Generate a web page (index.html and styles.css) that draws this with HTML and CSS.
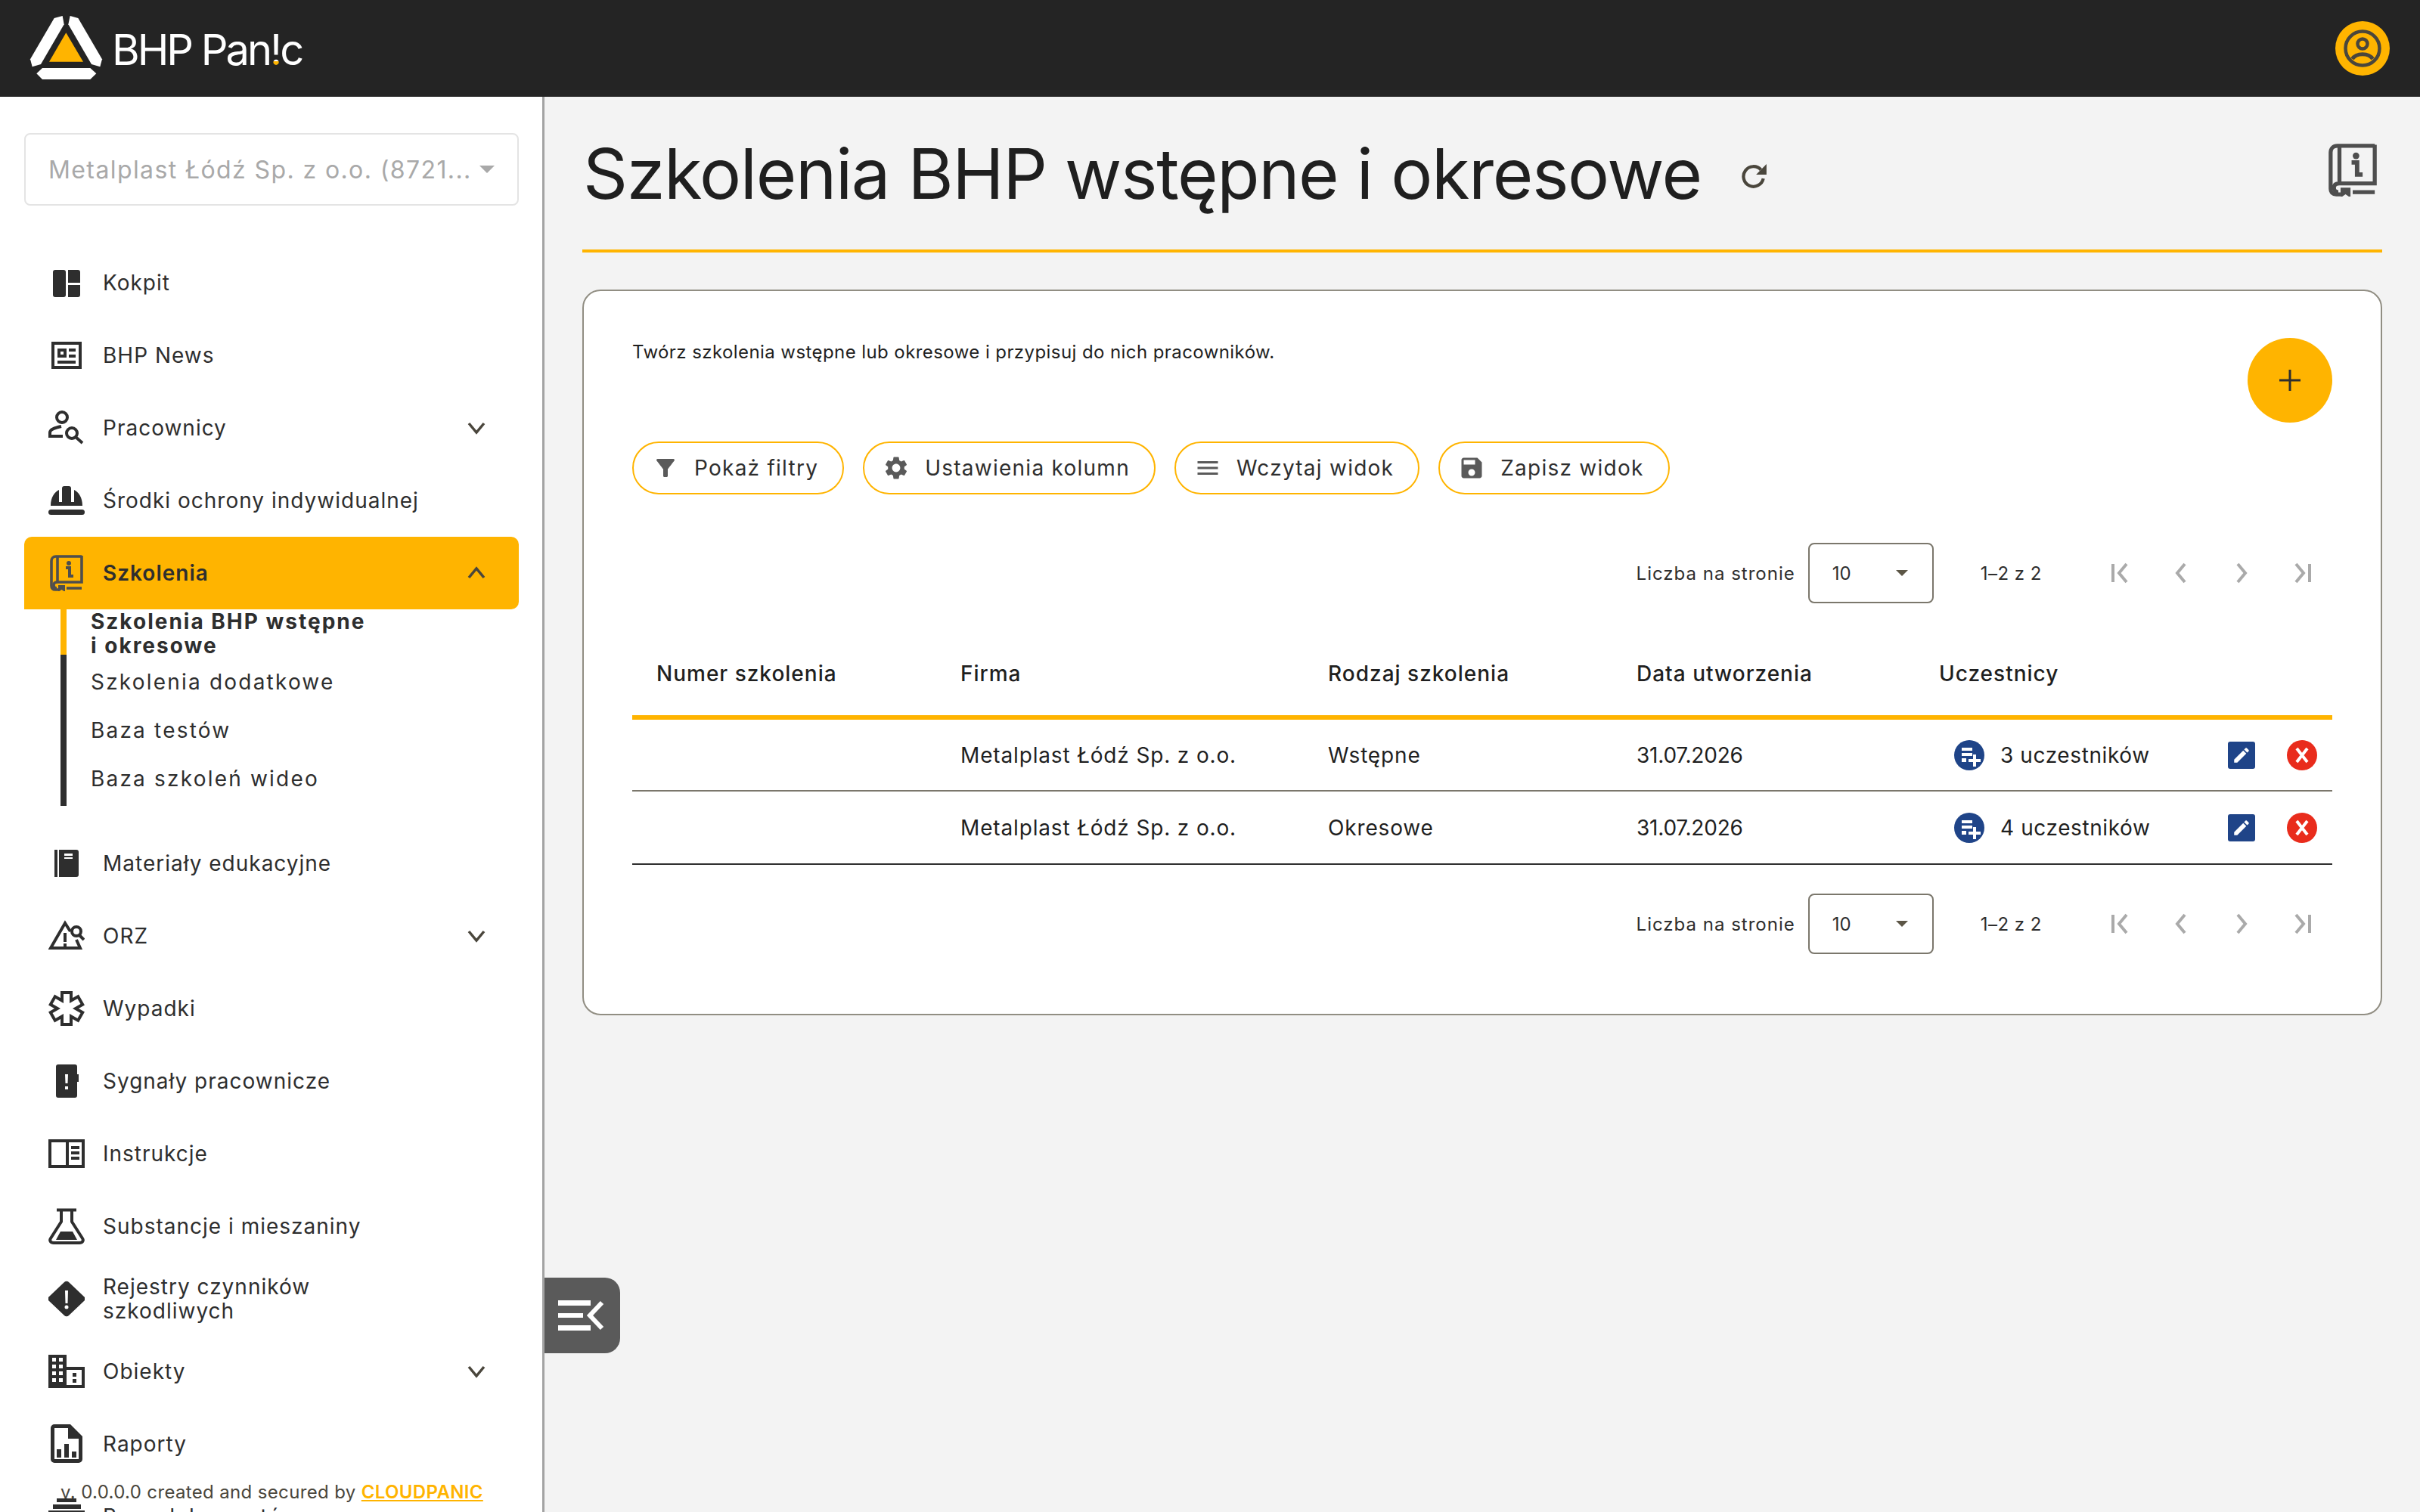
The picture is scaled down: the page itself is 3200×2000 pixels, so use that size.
FILE: index.html
```html
<!DOCTYPE html>
<html lang="pl">
<head>
    <meta charset="UTF-8">
    <title>BHP Panic - Szkolenia</title>
    <link rel="stylesheet" href="styles.css">
</head>
<body>
    <header class="topbar">
        <div class="logo">
            <svg class="logo-mark" viewBox="0 0 345 330">
                <polygon fill="#fff" points="125,45 158,36 164,70 72,228 38,238 30,208"/>
                <polygon fill="#fff" points="220,45 188,36 181,70 273,228 307,238 315,208"/>
                <polygon fill="#ffb400" points="172,103 240,218 105,218"/>
                <polygon fill="#fff" points="55,265 78,243 268,243 292,265 268,288 78,288"/>
            </svg>
            <span class="logo-text">BHP Pan<span class="logo-bang">!</span>c</span>
        </div>
        <div class="avatar">
            <svg viewBox="0 0 24 24" width="60" height="60" fill="none" stroke="#4a463c" stroke-width="1.8">
                <circle cx="12" cy="12" r="9"/>
                <circle cx="12" cy="9.6" r="2.6"/>
                <path d="M6.6 17.6c2-3.4 8.8-3.4 10.8 0" stroke-width="2"/>
            </svg>
        </div>
    </header>

    <div class="layout">
        <aside class="sidebar">
            <div class="company-select">
                <span>Metalplast Łódź Sp. z o.o. (8721...</span>
                <i class="company-arrow"></i>
            </div>

            <nav class="nav">
                <a class="nav-item">
                    <svg class="nav-icon" viewBox="0 0 48 48"><rect x="6" y="7" width="17" height="36" rx="3"/><path d="M26 7h13a3 3 0 0 1 3 3v14H26zM26 27h16v13a3 3 0 0 1-3 3H26z"/></svg>
                    <span>Kokpit</span>
                </a>
                <a class="nav-item">
                    <svg class="nav-icon" viewBox="0 0 48 48"><path fill-rule="evenodd" d="M4 6h40v36H4zM8 10v28h32V10z"/><path fill-rule="evenodd" d="M12 15h12v12H12zM16 19v4h4v-4z"/><path d="M27 15h9v4h-9zM27 23h9v4h-9zM12 31h24v4H12z"/></svg>
                    <span>BHP News</span>
                </a>
                <a class="nav-item">
                    <svg class="nav-icon" viewBox="0 0 48 48"><g fill="none" stroke="#2e2e2e" stroke-width="4"><circle cx="18" cy="10" r="7"/><path d="M17 22C8 24 2 26 2 30v5h17"/><circle cx="31" cy="31" r="7"/><path d="M36 36l9 8"/></g></svg>
                    <span>Pracownicy</span>
                    <svg class="nav-chevron" viewBox="0 0 24 24"><path d="M2 6l10 12L22 6"/></svg>
                </a>
                <a class="nav-item">
                    <svg class="nav-icon" viewBox="0 0 48 48"><path d="M3 31C3 20 8 13 14 10V26h4V8c0-2 1-3 3-3h6c2 0 3 1 3 3V26h4V10c6 3 11 10 11 21z"/><rect y="36" width="48" height="7" rx="3.5"/></svg>
                    <span>Środki ochrony indywidualnej</span>
                </a>
                <a class="nav-item nav-item-active">
                    <svg class="nav-icon" viewBox="0 0 48 48"><use href="#book-info"/></svg>
                    <span>Szkolenia</span>
                    <svg class="nav-chevron" viewBox="0 0 24 24"><path d="M2 18L12 6l10 12"/></svg>
                </a>
                <ul class="subnav">
                    <li class="subnav-item subnav-item-active"><span>Szkolenia BHP wstępne<br>i okresowe</span></li>
                    <li class="subnav-item"><span>Szkolenia dodatkowe</span></li>
                    <li class="subnav-item"><span>Baza testów</span></li>
                    <li class="subnav-item"><span>Baza szkoleń wideo</span></li>
                </ul>
                <a class="nav-item">
                    <svg class="nav-icon" viewBox="0 0 48 48"><rect x="8" y="6" width="4" height="36"/><path fill-rule="evenodd" d="M14 6h23a3 3 0 0 1 3 3v30a3 3 0 0 1-3 3H14zM21 11v3h11v-3zM21 16v2h11v-2z"/></svg>
                    <span>Materiały edukacyjne</span>
                </a>
                <a class="nav-item">
                    <svg class="nav-icon" viewBox="0 0 48 48"><g fill="none" stroke="#2e2e2e" stroke-width="4"><path d="M29 18L22 7 3 40h39l-5-11"/><circle cx="37" cy="18" r="6"/><path d="M41 23l6 6"/></g><rect x="20" y="20" width="4" height="12"/><rect x="20" y="34" width="4" height="4"/></svg>
                    <span>ORZ</span>
                    <svg class="nav-chevron" viewBox="0 0 24 24"><path d="M2 6l10 12L22 6"/></svg>
                </a>
                <a class="nav-item">
                    <svg class="nav-icon" viewBox="0 0 48 48"><polygon fill="none" stroke="#2e2e2e" stroke-width="4" points="18,3 30,3 30,13.6 39.2,8.3 45.2,18.7 36,24 45.2,29.3 39.2,39.7 30,34.4 30,45 18,45 18,34.4 8.8,39.7 2.8,29.3 12,24 2.8,18.7 8.8,8.3 18,13.6"/></svg>
                    <span>Wypadki</span>
                </a>
                <a class="nav-item">
                    <svg class="nav-icon" viewBox="0 0 48 48"><path fill-rule="evenodd" d="M13 2h22a3 3 0 0 1 3 3v10h2v10h-2v18a3 3 0 0 1-3 3H13a3 3 0 0 1-3-3V5a3 3 0 0 1 3-3zM22 15l.5 12h3l.5-12zM22 31v4h4v-4z"/></svg>
                    <span>Sygnały pracownicze</span>
                </a>
                <a class="nav-item">
                    <svg class="nav-icon" viewBox="0 0 48 48"><path fill-rule="evenodd" d="M0 5h48v38H0zM4 9v30h19V9zM27 9v30h17V9z"/><path d="M30 14h11v4H30zM30 21h11v4H30zM30 28h11v4H30z"/></svg>
                    <span>Instrukcje</span>
                </a>
                <a class="nav-item">
                    <svg class="nav-icon" viewBox="0 0 48 48"><g fill="none" stroke="#2e2e2e" stroke-width="4"><path d="M11 2.500h26"/><path d="M17 4v14L3 40c-2 3 0 6 4 6h34c4 0 6-3 4-6L31 18V4"/></g><polygon points="16,31 32,31 38,42 10,42"/></svg>
                    <span>Substancje i mieszaniny</span>
                </a>
                <a class="nav-item nav-item-wrap">
                    <svg class="nav-icon" viewBox="0 0 48 48"><path fill-rule="evenodd" d="M21 2a4 4 0 0 1 6 0l20 19a4 4 0 0 1 0 6L27 46a4 4 0 0 1-6 0L1 27a4 4 0 0 1 0-6zM22 13l.5 17h3l.5-17zM24 32.500a2.500 2.500 0 1 0 0 5 2.500 2.500 0 0 0 0-5z"/></svg>
                    <span>Rejestry czynników<br>szkodliwych</span>
                </a>
                <a class="nav-item">
                    <svg class="nav-icon" viewBox="0 0 48 48"><path fill-rule="evenodd" d="M0 2h24v16h24v28H0zM5 6v5h5V6zM14 6v5h5V6zM5 15v5h5v-5zM14 15v5h5v-5zM5 24v5h5v-5zM14 24v5h5v-5zM5 33v5h5v-5zM14 33v5h5v-5zM24 22v20h20V22zM32 26h5v5h-5zM32 34h5v5h-5z"/></svg>
                    <span>Obiekty</span>
                    <svg class="nav-chevron" viewBox="0 0 24 24"><path d="M2 6l10 12L22 6"/></svg>
                </a>
                <a class="nav-item">
                    <svg class="nav-icon nav-icon-tall" viewBox="0 0 48 54"><path fill-rule="evenodd" d="M8 1h21l16 16v30a5 5 0 0 1-5 5H8a5 5 0 0 1-5-5V6a5 5 0 0 1 5-5zM8 6v41h32V20H26V6z"/><path d="M11 34h6v11h-6zM21 27h6v18h-6zM31 37h6v8h-6z"/></svg>
                    <span>Raporty</span>
                </a>
                <a class="nav-item">
                    <svg class="nav-icon" viewBox="0 0 48 48"><path d="M11 0h26v5H11zM6 8h37v6H6zM0 16h48v6H0z"/></svg>
                    <span>Baza dokumentów</span>
                </a>
            </nav>

            <div class="version">v. 0.0.0.0 created and secured by <a class="version-link">CLOUDPANIC</a></div>
        </aside>

        <button class="sidebar-toggle">
            <svg viewBox="0 0 100 100" width="100" height="100"><path fill="#fff" d="M18 30h43v7H18zM18 47h33v6H18zM18 63h43v7H18z"/><path d="M76 33L60 50l16 17" fill="none" stroke="#fff" stroke-width="6"/></svg>
        </button>

        <main class="content">
            <div class="page-head">
                <h1 class="page-title">Szkolenia BHP wstępne i okresowe</h1>
                <svg class="refresh" viewBox="0 0 34 34" width="36" height="36"><path d="M28 20a12.500 12.500 0 1 1-3-11" fill="none" stroke="#4a463c" stroke-width="4"/><path fill="#4a463c" d="M32 2v13H19z"/></svg>
                <svg class="page-book" viewBox="0 0 48 48" width="70" height="70"><use href="#book-info"/></svg>
            </div>

            <section class="card">
                <div class="card-top">
                    <p class="card-desc">Twórz szkolenia wstępne lub okresowe i przypisuj do nich pracowników.</p>
                    <button class="fab"><svg viewBox="0 0 28 28" width="28" height="28"><path d="M12.500 0h3v12.500H28v3H15.500V28h-3V15.500H0v-3h12.500z" fill="#2e2e2e"/></svg></button>
                </div>

                <div class="actions">
                    <button class="pill">
                        <svg viewBox="0 0 24 24" width="36" height="36"><path d="M4.250 5.610C6.270 8.200 10 13 10 13v6c0 .55.45 1 1 1h2c.55 0 1-.45 1-1v-6s3.720-4.800 5.740-7.390c.51-.66.04-1.610-.79-1.610H5.040c-.83 0-1.300.95-.79 1.610z"/></svg>
                        Pokaż filtry
                    </button>
                    <button class="pill">
                        <svg viewBox="0 0 24 24" width="36" height="36"><path d="M19.140 12.940c.04-.3.06-.61.06-.94 0-.32-.02-.64-.07-.94l2.030-1.580c.18-.14.23-.41.12-.61l-1.920-3.320c-.12-.22-.37-.29-.59-.22l-2.390.96c-.5-.38-1.030-.7-1.620-.94l-.36-2.540c-.04-.24-.24-.41-.48-.41h-3.840c-.24 0-.43.17-.47.41l-.36 2.540c-.59.24-1.130.57-1.620.94l-2.390-.96c-.22-.08-.47 0-.59.22L2.740 8.870c-.12.21-.08.47.12.61l2.030 1.580c-.05.3-.09.63-.09.94s.02.64.07.94l-2.030 1.580c-.18.14-.23.41-.12.61l1.920 3.320c.12.22.37.29.59.22l2.390-.96c.5.38 1.030.7 1.620.94l.36 2.540c.05.24.24.41.48.41h3.840c.24 0 .44-.17.47-.41l.36-2.540c.59-.24 1.130-.56 1.620-.94l2.390.96c.22.08.47 0 .59-.22l1.920-3.320c.12-.22.07-.47-.12-.61l-2.010-1.580zM12 15.600c-1.980 0-3.600-1.620-3.600-3.600s1.620-3.600 3.600-3.600 3.600 1.620 3.600 3.600-1.620 3.600-3.600 3.600z"/></svg>
                        Ustawienia kolumn
                    </button>
                    <button class="pill">
                        <svg viewBox="0 0 24 24" width="36" height="36"><path d="M3 18h18v-2H3v2zm0-5h18v-2H3v2zm0-7v2h18V6H3z"/></svg>
                        Wczytaj widok
                    </button>
                    <button class="pill">
                        <svg viewBox="0 0 24 24" width="36" height="36"><path d="M17 3H5c-1.110 0-2 .9-2 2v14c0 1.100.89 2 2 2h14c1.100 0 2-.9 2-2V7l-4-4zm-5 16c-1.660 0-3-1.340-3-3s1.340-3 3-3 3 1.340 3 3-1.340 3-3 3zm3-10H5V5h10v4z"/></svg>
                        Zapisz widok
                    </button>
                </div>

                <div class="pager pager-top">
                    <span class="pager-label">Liczba na stronie</span>
                    <div class="pager-select"><span>10</span><i class="pager-arrow"></i></div>
                    <span class="pager-range">1–2 z 2</span>
                    <svg class="pager-btn" viewBox="0 0 80 40"><path d="M30 8v24M48 8L38 20l10 12"/></svg>
                    <svg class="pager-btn" viewBox="0 0 80 40"><path d="M45 8L35 20l10 12"/></svg>
                    <svg class="pager-btn" viewBox="0 0 80 40"><path d="M35 8l10 12-10 12"/></svg>
                    <svg class="pager-btn" viewBox="0 0 80 40"><path d="M50 8v24M32 8l10 12-10 12"/></svg>
                </div>

                <table class="grid">
                    <thead>
                        <tr>
                            <th class="col-number">Numer szkolenia</th>
                            <th class="col-company">Firma</th>
                            <th class="col-type">Rodzaj szkolenia</th>
                            <th class="col-date">Data utworzenia</th>
                            <th>Uczestnicy</th>
                        </tr>
                    </thead>
                    <tbody>
                        <tr>
                            <td></td>
                            <td>Metalplast Łódź Sp. z o.o.</td>
                            <td>Wstępne</td>
                            <td class="cell-date">31.07.2026</td>
                            <td>
                                <div class="people">
                                    <svg class="people-icon" viewBox="0 0 40 40"><circle cx="20" cy="20" r="20" fill="#1f4488"/><path fill="#fff" d="M10 10h14v4H10zM10 17h14v4H10zM10 24h6v5h-6zM25 19h4v6h6v4h-6v6h-4v-6h-6v-4h6z"/></svg>
                                    <span>3 uczestników</span>
                                    <button class="row-edit"><svg viewBox="0 0 24 24" width="26" height="26"><path fill="#fff" d="M3 17.250V21h3.750L17.810 9.940l-3.750-3.750L3 17.250zM20.710 7.040c.39-.39.39-1.020 0-1.410l-2.340-2.340c-.39-.39-1.020-.39-1.410 0l-1.830 1.830 3.750 3.750 1.830-1.830z"/></svg></button>
                                    <button class="row-delete"><svg viewBox="0 0 40 40" width="40" height="40"><path d="M13 11l14 18M27 11L13 29" stroke="#fff" stroke-width="4" fill="none"/></svg></button>
                                </div>
                            </td>
                        </tr>
                        <tr>
                            <td></td>
                            <td>Metalplast Łódź Sp. z o.o.</td>
                            <td>Okresowe</td>
                            <td class="cell-date">31.07.2026</td>
                            <td>
                                <div class="people">
                                    <svg class="people-icon" viewBox="0 0 40 40"><circle cx="20" cy="20" r="20" fill="#1f4488"/><path fill="#fff" d="M10 10h14v4H10zM10 17h14v4H10zM10 24h6v5h-6zM25 19h4v6h6v4h-6v6h-4v-6h-6v-4h6z"/></svg>
                                    <span>4 uczestników</span>
                                    <button class="row-edit"><svg viewBox="0 0 24 24" width="26" height="26"><path fill="#fff" d="M3 17.250V21h3.750L17.810 9.940l-3.750-3.750L3 17.250zM20.710 7.040c.39-.39.39-1.020 0-1.410l-2.340-2.340c-.39-.39-1.020-.39-1.410 0l-1.830 1.830 3.750 3.750 1.830-1.830z"/></svg></button>
                                    <button class="row-delete"><svg viewBox="0 0 40 40" width="40" height="40"><path d="M13 11l14 18M27 11L13 29" stroke="#fff" stroke-width="4" fill="none"/></svg></button>
                                </div>
                            </td>
                        </tr>
                    </tbody>
                </table>

                <div class="pager pager-bottom">
                    <span class="pager-label">Liczba na stronie</span>
                    <div class="pager-select"><span>10</span><i class="pager-arrow"></i></div>
                    <span class="pager-range">1–2 z 2</span>
                    <svg class="pager-btn" viewBox="0 0 80 40"><path d="M30 8v24M48 8L38 20l10 12"/></svg>
                    <svg class="pager-btn" viewBox="0 0 80 40"><path d="M45 8L35 20l10 12"/></svg>
                    <svg class="pager-btn" viewBox="0 0 80 40"><path d="M35 8l10 12-10 12"/></svg>
                    <svg class="pager-btn" viewBox="0 0 80 40"><path d="M50 8v24M32 8l10 12-10 12"/></svg>
                </div>
            </section>
        </main>
    </div>

    <!-- book icon shared by the sidebar and the page head -->
    <svg class="icon-defs" width="0" height="0">
        <symbol id="book-info" viewBox="0 0 48 48">
            <g fill="none" stroke="#4e4e4e" stroke-width="3.600">
                <path d="M44 2H10C6.500 2 4 4.500 4 8v33c0 3 2 5 5 5h4"/>
                <path d="M44 1v35H12c-4 0-5 2-5 4s1 4 4 4M12 36V2"/>
                <path d="M24 44h20"/>
            </g>
            <path fill="#4e4e4e" d="M13 40h9v9l-4.500-3-4.500 3z"/>
            <circle cx="27" cy="11" r="3" fill="#4e4e4e"/>
            <path d="M23 17h5v11h5" fill="none" stroke="#4e4e4e" stroke-width="4"/>
        </symbol>
    </svg>
</body>
</html>
```

FILE: styles.css
```css
* {
    box-sizing: border-box;
}

body {
    margin: 0;
    height: 2000px;
    overflow: hidden;
    background: #f3f3f3;
    color: #2e2e2e;
    font-family: Inter, "Noto Sans", sans-serif;
}

button {
    font-family: inherit;
    cursor: pointer;
}

.icon-defs {
    position: absolute;
}

/* Top bar */
.topbar {
    height: 128px;
    background: #242424;
    display: flex;
    align-items: center;
    justify-content: space-between;
    padding: 0 40px 0 30px;
}

.logo {
    display: flex;
    align-items: center;
    gap: 3px;
}

.logo-mark {
    width: 115px;
    height: 110px;
}

.logo-text {
    color: #fff;
    font-size: 56px;
    letter-spacing: -3px;
    margin-top: 4px;
}

.logo-bang {
    background: linear-gradient(#fff 72%, #ffb400 72%);
    -webkit-background-clip: text;
    background-clip: text;
    color: transparent;
}

.avatar {
    width: 72px;
    height: 72px;
    border-radius: 50%;
    background: #ffb400;
    display: flex;
    align-items: center;
    justify-content: center;
}

/* Sidebar */
.layout {
    position: relative;
    display: flex;
    height: 1872px;
}

.sidebar {
    position: relative;
    width: 720px;
    flex-shrink: 0;
    background: #fff;
    border-right: 3px solid #a3a3a3;
    padding: 48px 31px 0 32px;
    overflow: hidden;
}

.company-select {
    height: 96px;
    border: 2px solid #e4e4e4;
    border-radius: 8px;
    display: flex;
    align-items: center;
    justify-content: space-between;
    padding: 0 30px 0 30px;
    color: #a9a9a9;
    font-size: 32px;
    letter-spacing: 1.4px;
}

.company-arrow {
    border-left: 10px solid transparent;
    border-right: 10px solid transparent;
    border-top: 10px solid #a9a9a9;
}

.nav {
    margin-top: 54px;
}

.nav-item {
    height: 96px;
    display: flex;
    align-items: center;
    gap: 24px;
    padding: 0 44px 0 32px;
    font-size: 28px;
    line-height: 32px;
    letter-spacing: 1px;
}

.nav-item-active {
    background: #ffb400;
    border-radius: 10px 10px 10px 0;
    font-weight: 600;
}

.nav-icon {
    width: 48px;
    height: 48px;
    flex-shrink: 0;
    fill: #2e2e2e;
}

.nav-icon-tall {
    height: 54px;
}

.nav-chevron {
    width: 24px;
    height: 24px;
    margin-left: auto;
    fill: none;
    stroke: #4a463c;
    stroke-width: 3.500;
}

.subnav {
    list-style: none;
    margin: 0 0 28px 48px;
    padding: 0 0 4px 32px;
    border-left: 8px solid #2e2e2e;
    position: relative;
}

.subnav-item {
    height: 64px;
    display: flex;
    align-items: center;
    font-size: 28px;
    line-height: 32px;
    letter-spacing: 2.200px;
}

.subnav-item-active {
    font-weight: 700;
    letter-spacing: 2px;
    position: relative;
}

/* yellow part of the rail next to the open page */
.subnav-item-active::before {
    content: "";
    position: absolute;
    left: -40px;
    top: 0;
    width: 8px;
    height: 60px;
    background: #ffb400;
}

.version {
    position: absolute;
    left: 80px;
    top: 1830px;
    font-size: 24px;
    line-height: 32px;
    color: #4a463c;
    letter-spacing: 0.35px;
    white-space: nowrap;
}

.version-link {
    color: #ffb400;
    font-weight: 600;
    text-decoration: underline;
}

.sidebar-toggle {
    position: absolute;
    left: 720px;
    top: 1562px;
    width: 100px;
    height: 100px;
    padding: 0;
    border: 0;
    border-radius: 0 20px 20px 0;
    background: #5a5a5a;
    display: flex;
}

/* Main part */
.content {
    flex: 1;
    padding: 0 50px;
}

.page-head {
    height: 206px;
    border-bottom: 4px solid #ffb400;
    display: flex;
    align-items: center;
    padding-left: 1px;
}

.page-title {
    margin: 2px 0 0;
    font-size: 92px;
    font-weight: 400;
    line-height: 116px;
    letter-spacing: -1.400px;
    color: #1f1f1f;
}

.refresh {
    margin-left: 52px;
    margin-top: 8px;
}

.page-book {
    margin-left: auto;
    margin-right: 4px;
    margin-top: -8px;
}

.card {
    margin-top: 49px;
    height: 960px;
    background: #fff;
    border: 2px solid #918e83;
    border-radius: 24px;
    padding: 62px 64px 0;
}

.card-top {
    display: flex;
    justify-content: space-between;
    align-items: flex-start;
}

.card-desc {
    margin: 1px 0 0;
    font-size: 24px;
    line-height: 36px;
    letter-spacing: 0.42px;
    color: #1f1f1f;
}

.fab {
    width: 112px;
    height: 112px;
    border: 0;
    border-radius: 50%;
    background: #ffb400;
    display: flex;
    align-items: center;
    justify-content: center;
}

.actions {
    display: flex;
    gap: 25px;
    margin-top: 25px;
}

.pill {
    height: 70px;
    padding: 0 32px 0 26px;
    display: flex;
    align-items: center;
    gap: 22px;
    background: #fff;
    border: 2.500px solid #ffb400;
    border-radius: 35px;
    font-size: 28px;
    letter-spacing: 1.250px;
    color: #2e2e2e;
}

.pill svg {
    margin: 0 -2px;
    fill: #5a5a5a;
}

/* Pagination */
.pager {
    display: flex;
    align-items: center;
    justify-content: flex-end;
}

.pager-top {
    margin-top: 64px;
}

.pager-bottom {
    margin-top: 38px;
}

.pager-label {
    font-size: 24px;
    letter-spacing: 1px;
    color: #2e2e2e;
}

.pager-select {
    width: 166px;
    height: 80px;
    margin-left: 17px;
    border: 2px solid #7b776c;
    border-radius: 8px;
    display: flex;
    align-items: center;
    justify-content: space-between;
    padding: 0 32px 0 30px;
    font-size: 24px;
}

.pager-arrow {
    border-left: 8px solid transparent;
    border-right: 8px solid transparent;
    border-top: 8px solid #5c5646;
}

.pager-range {
    margin: 0 64px 0 62px;
    font-size: 24px;
    letter-spacing: 0.5px;
}

.pager-btn {
    width: 80px;
    height: 40px;
    fill: none;
    stroke: #aaa;
    stroke-width: 4;
}

/* Table */
.grid {
    width: 100%;
    margin-top: 37px;
    border-collapse: collapse;
    table-layout: fixed;
    color: #1f1f1f;
}

.grid th {
    height: 114px;
    padding: 0;
    text-align: left;
    font-size: 28px;
    font-weight: 500;
    letter-spacing: 1px;
    border-bottom: 6px solid #ffb400;
}

.grid th.col-number {
    width: 434px;
    padding-left: 32px;
}

.grid th.col-company {
    width: 486px;
}

.grid th.col-type {
    width: 408px;
}

.grid th.col-date {
    width: 400px;
}

.grid td {
    height: 97px;
    padding: 0;
    font-size: 28px;
    letter-spacing: 0.85px;
    border-bottom: 2px solid #7b776c;
}

.grid td.cell-date {
    letter-spacing: -0.2px;
}

.grid tbody tr:last-child td {
    border-bottom-color: #2e2e2e;
}

.people {
    display: flex;
    align-items: center;
    padding: 0 20px;
    letter-spacing: 0.6px;
}

.people-icon {
    width: 40px;
    height: 40px;
    margin-right: 21px;
}

.row-edit {
    margin-left: auto;
    width: 36px;
    height: 36px;
    padding: 0;
    border: 0;
    border-radius: 3px;
    background: #1f4488;
    display: flex;
    align-items: center;
    justify-content: center;
}

.row-delete {
    margin-left: 42px;
    width: 40px;
    height: 40px;
    padding: 0;
    border: 0;
    border-radius: 50%;
    background: #e92c1c;
    display: flex;
}
```
